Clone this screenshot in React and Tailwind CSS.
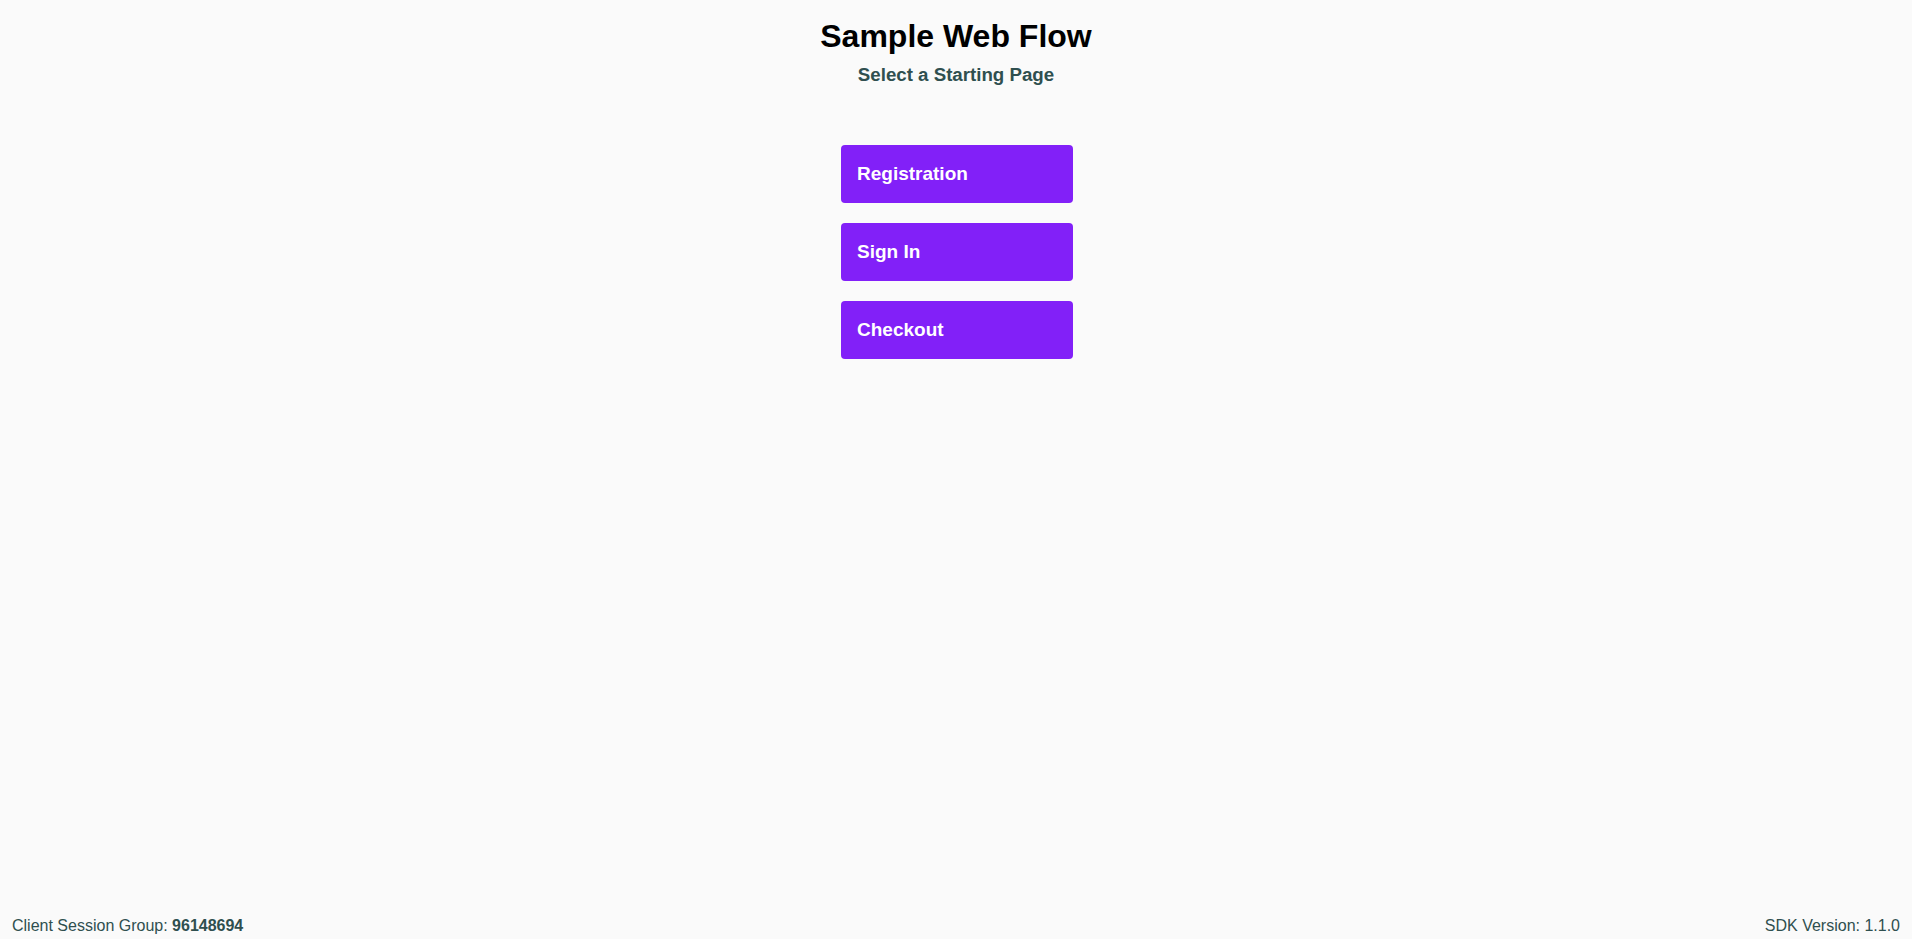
import React from 'react';

const pages = ['Registration', 'Sign In', 'Checkout'];

export default function App() {
  return (
    <div className="min-h-screen flex flex-col bg-[#fafafa] font-['Liberation_Sans',Arial,sans-serif]">
      <main className="flex-1 flex flex-col items-center pt-[18px]">
        <h1 className="text-[32px] leading-[37px] font-bold text-black">Sample Web Flow</h1>
        <h2 className="mt-[9px] text-[18.7px] leading-[22px] font-bold text-[#2f4f4f]">Select a Starting Page</h2>

        <div className="mt-[59px] ml-[2px] flex flex-col gap-[20px]">
          {pages.map((p) => (
            <button
              key={p}
              className="w-[232px] h-[58px] rounded-[4px] bg-[#8220f8] pl-[16px] text-left text-[19px] font-bold text-white"
            >
              {p}
            </button>
          ))}
        </div>
      </main>

      <footer className="flex justify-between px-[12px] pb-[4px] text-[16px] leading-[18px] text-[#2f4f4f]">
        <span>
          Client Session Group: <b>96148694</b>
        </span>
        <span>SDK Version: 1.1.0</span>
      </footer>
    </div>
  );
}
